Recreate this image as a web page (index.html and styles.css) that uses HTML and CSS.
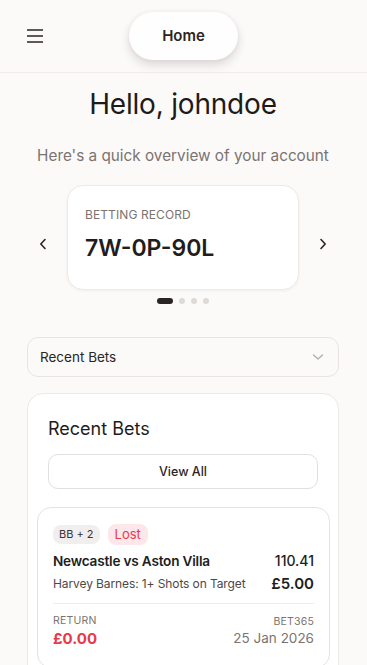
FILE: index.html
```html
<!DOCTYPE html>
<html lang="en">
<head>
<meta charset="utf-8">
<meta name="viewport" content="width=device-width, initial-scale=1">
<title>Home</title>
<link rel="stylesheet" href="styles.css">
</head>
<body>
<header class="topbar">
  <button class="menu-btn" aria-label="Menu">
    <svg width="16" height="14" viewBox="0 0 16 14"><path d="M0 1h16M0 7h16M0 13h16" stroke="#2a2524" stroke-width="1.6" fill="none"/></svg>
  </button>
  <div class="home-pill">Home</div>
</header>
<main class="main">
  <h1 class="greeting">Hello, johndoe</h1>
  <p class="subtitle">Here's a quick overview of your account</p>

  <section class="carousel">
    <button class="arrow" aria-label="Previous">
      <svg width="8" height="12" viewBox="0 0 8 12"><path d="M6 1.5L1.8 6 6 10.5" stroke="#2a2524" stroke-width="1.6" fill="none" stroke-linecap="round" stroke-linejoin="round"/></svg>
    </button>
    <div class="stat-card">
      <div class="stat-label">BETTING RECORD</div>
      <div class="stat-value">7W-0P-90L</div>
    </div>
    <button class="arrow" aria-label="Next">
      <svg width="8" height="12" viewBox="0 0 8 12"><path d="M2 1.5L6.2 6 2 10.5" stroke="#2a2524" stroke-width="1.6" fill="none" stroke-linecap="round" stroke-linejoin="round"/></svg>
    </button>
  </section>
  <div class="dots">
    <span class="dot active"></span><span class="dot"></span><span class="dot"></span><span class="dot"></span>
  </div>

  <div class="select">
    <span>Recent Bets</span>
    <svg width="12" height="8" viewBox="0 0 12 8"><path d="M1.5 2l4.5 4 4.5-4" stroke="#b3adaa" stroke-width="1.3" fill="none" stroke-linecap="round" stroke-linejoin="round"/></svg>
  </div>

  <section class="panel">
    <h2 class="panel-title">Recent Bets</h2>
    <button class="view-all">View All</button>
    <div class="bet-list">
      <article class="bet">
        <div class="badges">
          <span class="badge">BB + 2</span>
          <span class="badge lost">Lost</span>
        </div>
        <div class="bet-row first">
          <span class="bet-title">Newcastle vs Aston Villa</span>
          <span class="bet-odds">110.41</span>
        </div>
        <div class="bet-row">
          <span class="bet-sel">Harvey Barnes: 1+ Shots on Target</span>
          <span class="bet-stake">£5.00</span>
        </div>
        <div class="bet-foot">
          <div class="foot-left">
            <span class="foot-label">RETURN</span>
            <span class="return-val">£0.00</span>
          </div>
          <div class="foot-right">
            <span class="foot-label">BET365</span>
            <span class="bet-date">25 Jan 2026</span>
          </div>
        </div>
      </article>
    </div>
  </section>
</main>
</body>
</html>
```
FILE: styles.css
```css
* { box-sizing: border-box; }
html, body { margin: 0; padding: 0; }
body {
  background: #fbfaf9;
  font-family: Inter, "Noto Sans", "Liberation Sans", sans-serif;
  color: #221d1c;
  overflow: hidden;
}
button { font-family: inherit; }

.topbar {
  position: relative;
  height: 73px;
  border-bottom: 1px solid #efecea;
  display: flex;
  align-items: center;
  justify-content: center;
}
.menu-btn {
  position: absolute;
  left: 27px;
  top: 29px;
  padding: 0;
  border: 0;
  background: none;
  line-height: 0;
}
.home-pill {
  width: 109px;
  height: 48px;
  margin-top: -1px;
  border-radius: 24px;
  background: #fefefe;
  box-shadow: 0 5px 10px rgba(60, 40, 35, 0.16), 0 0 4px rgba(60, 40, 35, 0.05);
  display: flex;
  align-items: center;
  justify-content: center;
  font-size: 15px;
  font-weight: 600;
  color: #2a2524;
}

.main { padding: 0 28px 0 27px; }
.greeting {
  margin: 14px 0 0;
  text-align: center;
  font-size: 28px;
  line-height: 34px;
  font-weight: 400;
  letter-spacing: -0.2px;
  color: #1f1a19;
}
.subtitle {
  margin: 25px 0 0;
  text-align: center;
  font-size: 15.3px;
  line-height: 20px;
  color: #7b7370;
}

.carousel {
  margin-top: 19px;
  display: flex;
  align-items: center;
  justify-content: center;
  gap: 19px;
}
.arrow {
  width: 10px;
  padding: 0;
  border: 0;
  background: none;
  line-height: 0;
  margin-top: 13px;
}
.stat-card {
  width: 232px;
  height: 105px;
  background: #fff;
  border: 1px solid #edeae8;
  border-radius: 16px;
  box-shadow: 0 1px 3px rgba(60, 40, 35, 0.05);
  padding: 22px 17px 0;
}
.stat-label {
  font-size: 12px;
  line-height: 14px;
  letter-spacing: 0.1px;
  color: #7b7370;
}
.stat-value {
  margin-top: 10px;
  font-size: 23px;
  line-height: 32px;
  font-weight: 600;
  color: #221d1c;
}
.dots {
  margin-top: 8px;
  display: flex;
  justify-content: center;
  gap: 6px;
}
.dot {
  width: 6px;
  height: 6px;
  border-radius: 3px;
  background: #dedad8;
}
.dot.active { width: 16px; background: #2a2524; }

.select {
  margin-top: 33px;
  height: 40px;
  border: 1px solid #e8e4e2;
  border-radius: 11px;
  background: #fbfaf9;
  display: flex;
  align-items: center;
  justify-content: space-between;
  padding: 0 14px 0 12px;
  font-size: 13.5px;
  color: #2a2524;
}

.panel {
  margin-top: 16px;
  background: #fff;
  border: 1px solid #ece9e7;
  border-radius: 16px;
  padding: 23px 20px 20px 20px;
  min-height: 300px;
}
.panel-title {
  margin: 0;
  font-size: 18px;
  line-height: 24px;
  font-weight: 400;
  color: #221d1c;
}
.view-all {
  margin-top: 13px;
  width: 100%;
  height: 35px;
  border: 1px solid #e3dfdd;
  border-radius: 10px;
  background: #fff;
  font-size: 12.5px;
  font-weight: 500;
  color: #2a2524;
}
.bet-list { margin: 18px -12px 0 -11px; }
.bet {
  border: 1px solid #e6e2e0;
  border-radius: 14px;
  background: #fff;
  padding: 16px 15px 18px 15px;
}
.badges { display: flex; align-items: center; gap: 8px; }
.badge {
  height: 19px;
  padding: 0 6px;
  border-radius: 8px;
  background: #f1efee;
  font-size: 11px;
  line-height: 19px;
  color: #3a3432;
}
.badge.lost {
  height: 21px;
  line-height: 21px;
  padding: 0 7px;
  background: #fde7ea;
  color: #e8394a;
  font-size: 13px;
}
.bet-row {
  display: flex;
  justify-content: space-between;
  align-items: center;
  margin-top: 3px;
}
.bet-row.first { margin-top: 6px; }
.bet-title { font-size: 13.6px; line-height: 20px; font-weight: 600; letter-spacing: -0.2px; color: #221d1c; }
.bet-odds { font-size: 14px; line-height: 20px; font-weight: 500; color: #221d1c; }
.bet-sel { font-size: 12px; line-height: 20px; letter-spacing: -0.1px; color: #4f4846; }
.bet-stake { font-size: 15px; line-height: 20px; font-weight: 600; color: #221d1c; }
.bet-foot {
  margin-top: 9px;
  border-top: 1px solid #efecea;
  padding-top: 10px;
  display: flex;
  justify-content: space-between;
}
.foot-left, .foot-right { display: flex; flex-direction: column; }
.foot-right { align-items: flex-end; padding-top: 1px; }
.foot-label { font-size: 10.5px; line-height: 14px; color: #7b7370; letter-spacing: 0.2px; }
.return-val { margin-top: 1px; font-size: 15px; line-height: 20px; font-weight: 700; color: #e8394a; }
.bet-date { margin-top: 0; font-size: 13.5px; line-height: 18px; color: #7b7370; }
```
